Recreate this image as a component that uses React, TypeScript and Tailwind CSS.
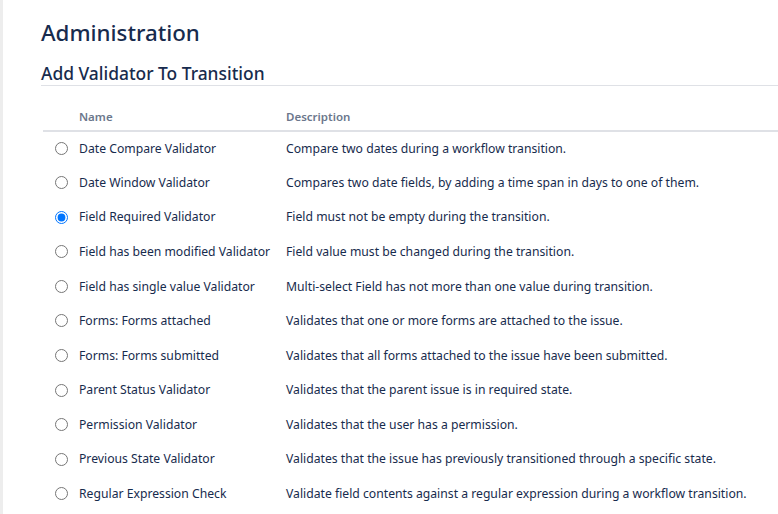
import React from 'react'

const validators = [
  { name: 'Date Compare Validator', description: 'Compare two dates during a workflow transition.' },
  { name: 'Date Window Validator', description: 'Compares two date fields, by adding a time span in days to one of them.' },
  { name: 'Field Required Validator', description: 'Field must not be empty during the transition.' },
  { name: 'Field has been modified Validator', description: 'Field value must be changed during the transition.' },
  { name: 'Field has single value Validator', description: 'Multi-select Field has not more than one value during transition.' },
  { name: 'Forms: Forms attached', description: 'Validates that one or more forms are attached to the issue.' },
  { name: 'Forms: Forms submitted', description: 'Validates that all forms attached to the issue have been submitted.' },
  { name: 'Parent Status Validator', description: 'Validates that the parent issue is in required state.' },
  { name: 'Permission Validator', description: 'Validates that the user has a permission.' },
  { name: 'Previous State Validator', description: 'Validates that the issue has previously transitioned through a specific state.' },
  { name: 'Regular Expression Check', description: 'Validate field contents against a regular expression during a workflow transition.' },
]

export default function App() {
  return (
    <div
      className="min-h-screen overflow-hidden bg-white text-[#172b4d] border-l-[3px] border-[#ededed]"
      style={{ fontFamily: '"Segoe UI", "Noto Sans", "Liberation Sans", sans-serif' }}
    >
      <div className="pl-[38px] pt-[18px]">
        <h1 className="text-[22.3px] leading-[30px] font-medium">Administration</h1>
        <h2 className="mt-[14px] text-[17.4px] leading-[22px] font-medium pb-[1px] border-b border-[#dfe1e6]">
          Add Validator To Transition
        </h2>

        <table className="ml-[2px] mt-[16px] w-[735px] border-collapse text-[12.2px]">
          <thead>
            <tr className="border-b-2 border-[#dfe1e6] text-[11.5px] text-[#6b778c]">
              <th className="w-[36px] h-[29px]"></th>
              <th className="w-[207px] text-left font-semibold align-bottom pb-[5px]">Name</th>
              <th className="text-left font-semibold align-bottom pb-[5px]">Description</th>
            </tr>
          </thead>
          <tbody>
            {validators.map((v) => (
              <tr key={v.name} className="h-[34.6px]">
                <td className="text-center align-middle pl-[1px]">
                  <input
                    type="radio"
                    name="validator"
                    defaultChecked={v.name === 'Field Required Validator'}
                    className="align-middle mt-[-2px]"
                  />
                </td>
                <td className="align-middle whitespace-nowrap">{v.name}</td>
                <td className="align-middle whitespace-nowrap">{v.description}</td>
              </tr>
            ))}
          </tbody>
        </table>
      </div>
    </div>
  )
}
